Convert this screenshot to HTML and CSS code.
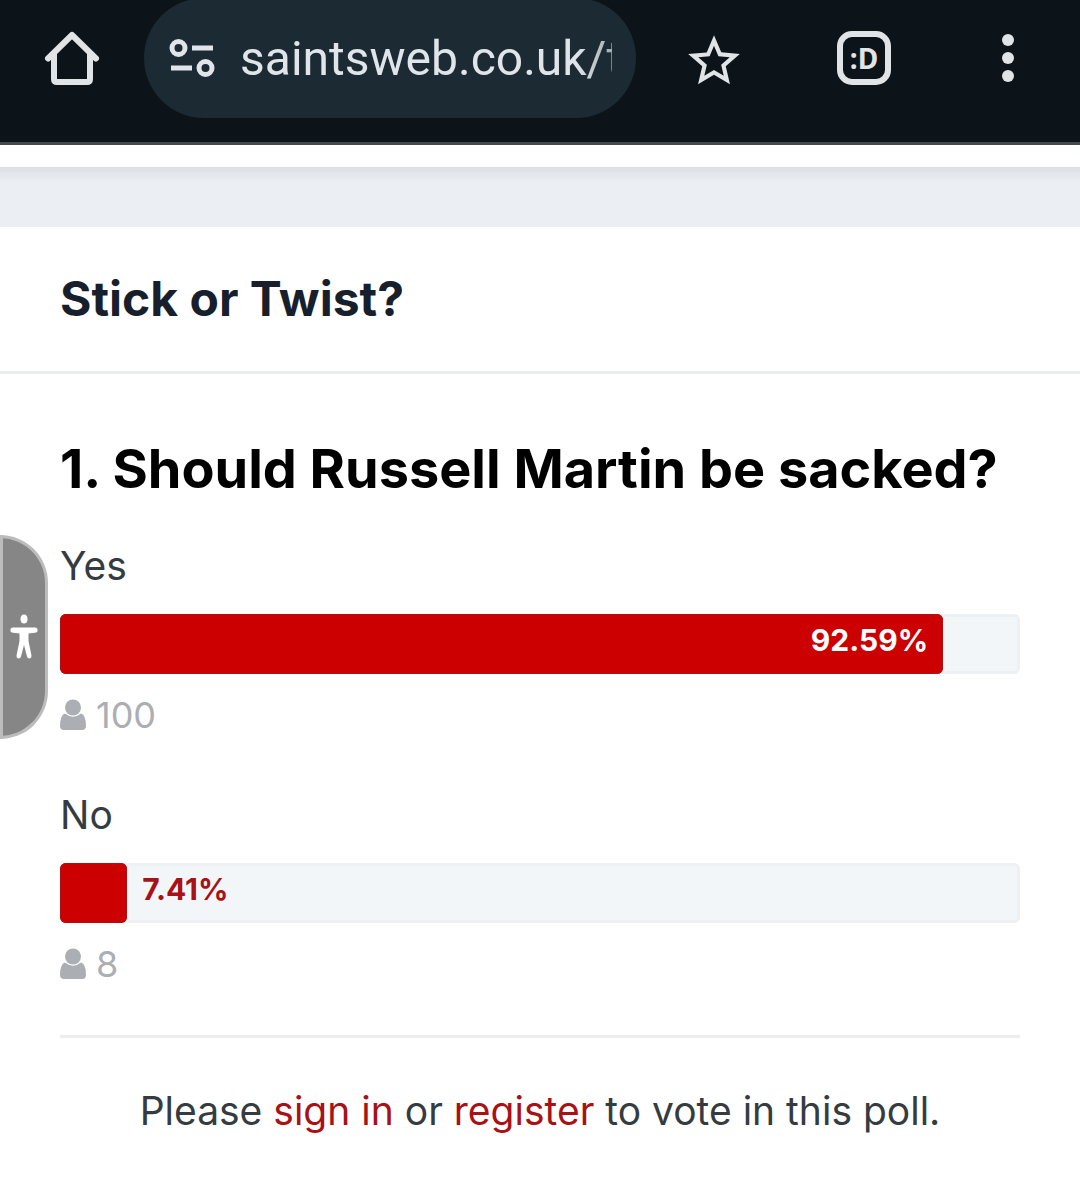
FILE: index.html
```html
<!DOCTYPE html>
<html lang="en">
<head>
<meta charset="utf-8">
<meta name="viewport" content="width=device-width, initial-scale=1">
<title>Stick or Twist?</title>
<link rel="stylesheet" href="styles.css">
</head>
<body>
<header class="browser-bar">
  <button class="icon-button" type="button" aria-label="Home">
    <svg width="56" height="56" viewBox="0 0 56 56" fill="none" stroke="currentColor" stroke-width="6"><path d="M4 28.500 28 5 52 28.500" stroke-linecap="round" stroke-linejoin="round"/><path d="M10 23V49Q10 52 13 52H43Q46 52 46 49V23"/></svg>
  </button>
  <div class="address">
    <svg width="48" height="40" viewBox="0 0 48 40" fill="none" stroke="currentColor" stroke-width="5" aria-hidden="true"><circle cx="10.500" cy="10" r="6.500"/><path d="M24 10H45M3 30H24"/><circle cx="37.500" cy="30" r="6.500"/></svg>
    <input class="address-input" type="text" value="saintsweb.co.uk/t" aria-label="Address">
  </div>
  <button class="icon-button" type="button" aria-label="Bookmark">
    <svg width="62" height="62" viewBox="0 -1.2 24 24" fill="currentColor"><path d="M22 9.240l-7.190-.620L12 2 9.190 8.630 2 9.240l5.460 4.730L5.820 21 12 17.270 18.180 21l-1.630-7.030L22 9.240zM12 15.400l-3.760 2.270 1-4.280-3.320-2.880 4.380-.380L12 6.100l1.710 4.040 4.380.380-3.320 2.880 1 4.280L12 15.400z"/></svg>
  </button>
  <button class="icon-button" type="button" aria-label="Tabs"><span class="tab-count">:D</span></button>
  <button class="icon-button" type="button" aria-label="Menu">
    <svg width="56" height="56" viewBox="0 0 56 56" fill="currentColor"><circle cx="28" cy="10" r="6"/><circle cx="28" cy="28" r="6"/><circle cx="28" cy="46" r="6"/></svg>
  </button>
</header>
<div class="site-nav"></div>
<main class="poll">
  <h1 class="poll-title">Stick or Twist?</h1>
  <div class="poll-body">
    <h2 class="question">1. Should Russell Martin be sacked?</h2>
    <ul class="choices">
      <li class="choice">
        <span class="choice-name">Yes</span>
        <div class="bar"><div class="bar-fill" style="width:92%"><span class="percent">92.59%</span></div></div>
        <span class="votes"><svg width="26" height="32" viewBox="0 0 26 32" fill="currentColor" aria-hidden="true"><circle cx="13" cy="8.500" r="8"/><path d="M5 14.500Q13 21 21 14.500Q26 16 26 27Q26 31 22 31H4Q0 31 0 27Q0 16 5 14.500Z"/></svg>100</span>
      </li>
      <li class="choice">
        <span class="choice-name">No</span>
        <div class="bar"><div class="bar-fill" style="width:7%"></div><span class="percent percent-out">7.41%</span></div>
        <span class="votes"><svg width="26" height="32" viewBox="0 0 26 32" fill="currentColor" aria-hidden="true"><circle cx="13" cy="8.500" r="8"/><path d="M5 14.500Q13 21 21 14.500Q26 16 26 27Q26 31 22 31H4Q0 31 0 27Q0 16 5 14.500Z"/></svg>8</span>
      </li>
    </ul>
    <p class="notice">Please <a href="#signin">sign in</a> or <a href="#register">register</a> to vote in this poll.</p>
  </div>
</main>
<button class="accessibility" type="button" aria-label="Accessibility options">
  <svg width="28" height="46" viewBox="0 0 28 46" fill="currentColor"><ellipse cx="14" cy="5" rx="3.500" ry="4.500"/><path d="M3 13.500H25a2.600 2.600 0 0 1 0 5.200L18.500 19.500V27L21.500 41.500Q21.500 44.500 19.500 44.500T17 42.500L14 31 11 42.500Q10.500 44.500 8.500 44.500T6.500 41.500L9.500 27V19.500L3 18.700a2.600 2.600 0 0 1 0-5.200Z"/></svg>
</button>
</body>
</html>
```
FILE: styles.css
```css
* { box-sizing: border-box; }

body {
  position: relative;
  margin: 0;
  background: #fff;
  color: #353c41;
  font-family: Inter, sans-serif;
}

button { border: 0; padding: 0; font: inherit; cursor: pointer; }

.browser-bar {
  display: flex;
  align-items: flex-start;
  height: 145px;
  border-bottom: 3px solid #45494b;
  background: #0c1319;
  color: #e1e4e6;
}

.icon-button {
  display: grid;
  place-items: center;
  flex: 0 0 144px;
  height: 116px;
  background: none;
  color: inherit;
}

.address + .icon-button { flex-basis: 156px; }

.address {
  display: flex;
  align-items: center;
  gap: 24px;
  flex: 1;
  min-width: 0;
  height: 120px;
  margin-top: -2px;
  padding: 0 24px;
  border-radius: 60px;
  background: #1c2a33;
  color: #dfe5ea;
}

.address svg { flex: none; }

.address-input {
  flex: 1;
  min-width: 0;
  height: 72px;
  padding: 0;
  border: 0;
  outline: 0;
  background: none;
  color: inherit;
  font: 48px Roboto, sans-serif;
  mask-image: linear-gradient(to left, rgba(0, 0, 0, .7), #000 36px);
}

.tab-count {
  display: grid;
  place-items: center;
  width: 54px;
  height: 54px;
  border: 6px solid;
  border-radius: 15px;
  font: 700 28px "Noto Sans", sans-serif;
}

.site-nav {
  height: 82px;
  border-top: 22px solid #fff;
  background: linear-gradient(#dcdfe3, #ebeff4 15px) padding-box;
}

.poll-title {
  margin: 0;
  padding: 42px 60px;
  border-bottom: 3px solid #ebeced;
  color: #171f2c;
  font-size: 48px;
  font-weight: 700;
  line-height: 60px;
}

.poll-body { padding: 60px; }

.question {
  margin: 0 0 32px;
  color: #000;
  font-size: 54px;
  font-weight: 700;
  line-height: 70px;
}

.choices {
  display: grid;
  gap: 45px;
  margin: 0;
  padding: 0 0 46px;
  border-bottom: 3px solid #ededee;
  list-style: none;
}

.choice { display: grid; }

.choice-name {
  margin-bottom: 18px;
  font-size: 39px;
  line-height: 60px;
}

.bar {
  display: flex;
  height: 60px;
  border-radius: 6px;
  background: #f3f6f9;
  box-shadow: inset 0 0 0 3px #edf1f4;
}

.bar-fill {
  border-radius: 6px;
  background: #c00;
  box-shadow: inset 0 0 0 1px #ae1015;
  text-align: right;
}

.percent {
  padding: 0 15px;
  color: #fff;
  font-size: 30px;
  font-weight: 700;
  line-height: 52px;
}

.percent-out { color: #a81116; }

.votes {
  display: flex;
  align-items: center;
  gap: 10px;
  margin-top: 16px;
  color: #abafb3;
  font-size: 36px;
  line-height: 50px;
}

.notice {
  margin: 0;
  padding-top: 43px;
  font-size: 39px;
  line-height: 60px;
  text-align: center;
}

.notice a { color: #a81116; text-decoration: none; }

.accessibility {
  position: absolute;
  top: 535px;
  left: 0;
  display: grid;
  place-items: center;
  width: 48px;
  height: 204px;
  border: 3px solid #bcbcbc;
  border-radius: 0 48px 48px 0;
  background: #868686;
  color: #fff;
}
```
